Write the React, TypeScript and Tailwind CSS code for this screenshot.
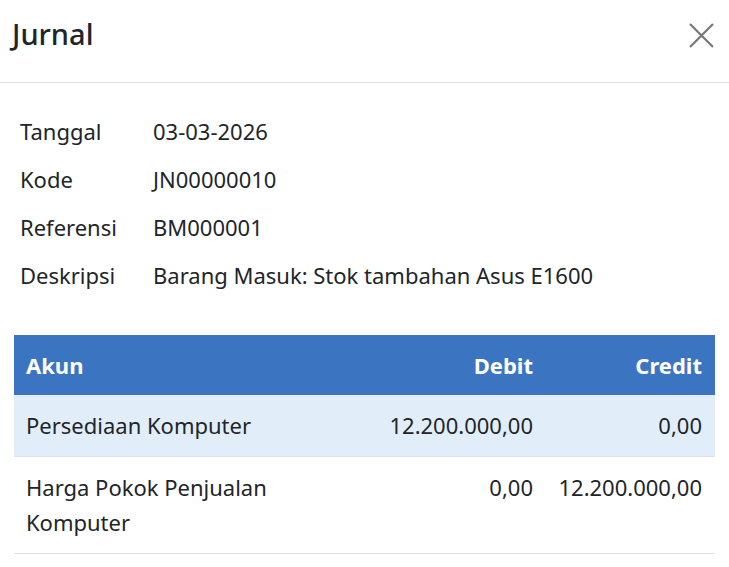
import React from "react";

const info = [
  { label: "Tanggal", value: "03-03-2026" },
  { label: "Kode", value: "JN00000010" },
  { label: "Referensi", value: "BM000001" },
  { label: "Deskripsi", value: "Barang Masuk: Stok tambahan Asus E1600" },
];

const rows = [
  { akun: "Persediaan Komputer", debit: "12.200.000,00", credit: "0,00", shade: true },
  { akun: "Harga Pokok Penjualan Komputer", debit: "0,00", credit: "12.200.000,00", shade: false },
];

export default function App() {
  return (
    <div
      className="w-[729px] h-[567px] overflow-hidden bg-white text-[#212529]"
      style={{ fontFamily: '"Noto Sans", "Open Sans", sans-serif' }}
    >
      {/* header */}
      <div className="h-[83px] border-b border-[#dee2e6] flex items-start justify-between pl-[12px] pr-[15px] pt-[16px]">
        <h5 className="text-[29px] leading-[36px] font-medium">Jurnal</h5>
        <button className="mt-[7px] text-[#777]" aria-label="Close">
          <svg width="25" height="25" viewBox="0 0 25 25" fill="none" stroke="currentColor" strokeWidth="2.2">
            <path d="M1 1 L24 24 M24 1 L1 24" />
          </svg>
        </button>
      </div>

      {/* body */}
      <div className="px-[14px] pt-[31px]">
        <div className="pl-[6px] flex flex-col gap-[13px] text-[22px] leading-[35px]">
          {info.map((r) => (
            <div key={r.label} className="flex">
              <div className="w-[133px] shrink-0">{r.label}</div>
              <div>{r.value}</div>
            </div>
          ))}
        </div>

        <div className="mt-[42px] text-[22px] leading-[35px]">
          <div className="grid grid-cols-[362px_169px_169px] bg-[#3b74c1] text-white font-bold">
            <div className="px-[12px] pt-[13px] pb-[12px]">Akun</div>
            <div className="px-[12px] pt-[13px] pb-[12px] text-right">Debit</div>
            <div className="px-[12px] pt-[13px] pb-[12px] text-right">Credit</div>
          </div>
          {rows.map((r) => (
            <div
              key={r.akun}
              className={`grid grid-cols-[362px_169px_169px] border-b border-[#dee2e6] ${r.shade ? "bg-[#e1eefa]" : "bg-white"}`}
            >
              <div className="px-[12px] py-[13px] pr-[80px]">{r.akun}</div>
              <div className="px-[12px] py-[13px] text-right">{r.debit}</div>
              <div className="px-[12px] py-[13px] text-right">{r.credit}</div>
            </div>
          ))}
        </div>
      </div>
    </div>
  );
}
